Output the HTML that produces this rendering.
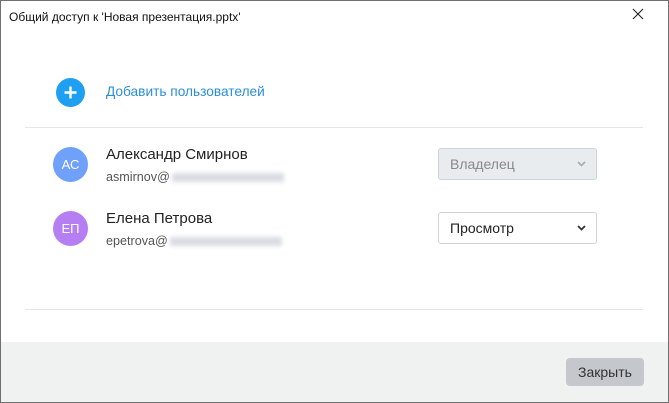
<!DOCTYPE html>
<html><head><meta charset="utf-8"><style>
*{margin:0;padding:0;box-sizing:border-box}
body{width:669px;height:403px;overflow:hidden;background:#fff;font-family:"Liberation Sans","DejaVu Sans",sans-serif;position:relative}
.win{position:absolute;left:0;top:0;width:669px;height:403px;border:1px solid #707070}
.a{position:absolute}
.footer{left:1px;top:342px;width:667px;height:60px;background:#f0f1f1}
.hr{height:1px;background:#e6e6e6;left:25px;width:618px}
.av{width:35px;height:35px;border-radius:50%;color:#fff;font-size:13px;display:flex;align-items:center;justify-content:center}
.name{font-size:15px;color:#222;left:106px}
.mail{font-size:12.6px;color:#555;left:106px}
.blur{display:inline-block;width:112px;height:9px;background:#d9dde3;filter:blur(2px);vertical-align:middle;margin-left:2px}
.sel{left:438px;width:159px;height:32px;border:1px solid #ced4da;border-radius:3px;font-size:14px;padding:0 0 0 11px;line-height:30px}
.sel svg{position:absolute;right:10px;top:12px}
</style></head><body>
<div class="win"></div>
<div class="a" style="left:9px;top:10px;font-size:12px;color:#111">Общий доступ к 'Новая презентация.pptx'</div>
<svg class="a" style="left:632px;top:8px" width="12" height="12"><path d="M1 1L11 11M11 1L1 11" stroke="#222" stroke-width="1.1"/></svg>
<div class="a" style="left:56px;top:78px;width:29px;height:29px;border-radius:50%;background:#1e9ff2"></div>
<svg class="a" style="left:56px;top:78px" width="29" height="29"><path d="M14.5 8.5V20.5M8.5 14.5H20.5" stroke="#fff" stroke-width="2.4"/></svg>
<div class="a" style="left:106px;top:84px;font-size:13.7px;color:#2b8fd7">Добавить пользователей</div>
<div class="a hr" style="top:127px"></div>
<div class="a av" style="left:53px;top:147px;background:#6fa1fb">АС</div>
<div class="a name" style="top:146px">Александр Смирнов</div>
<div class="a mail" style="top:170px">asmirnov@<span class="blur"></span></div>
<div class="a sel" style="top:148px;background:#e9ecef;color:#888">Владелец<svg width="9" height="6"><path d="M1 1L4.5 4.5L8 1" stroke="#aaa" stroke-width="1.6" fill="none"/></svg></div>
<div class="a av" style="left:53px;top:211px;background:#b57ef3">ЕП</div>
<div class="a name" style="top:210px">Елена Петрова</div>
<div class="a mail" style="top:234px">epetrova@<span class="blur"></span></div>
<div class="a sel" style="top:212px;background:#fff;color:#222">Просмотр<svg width="9" height="6"><path d="M1 1L4.5 4.5L8 1" stroke="#333" stroke-width="1.8" fill="none"/></svg></div>
<div class="a hr" style="top:309px"></div>
<div class="a footer"></div>
<div class="a" style="left:566px;top:358px;width:78px;height:28px;background:#c4c8cc;border-radius:4px;font-size:14px;color:#333;text-align:center;line-height:28px">Закрыть</div>
</body></html>
